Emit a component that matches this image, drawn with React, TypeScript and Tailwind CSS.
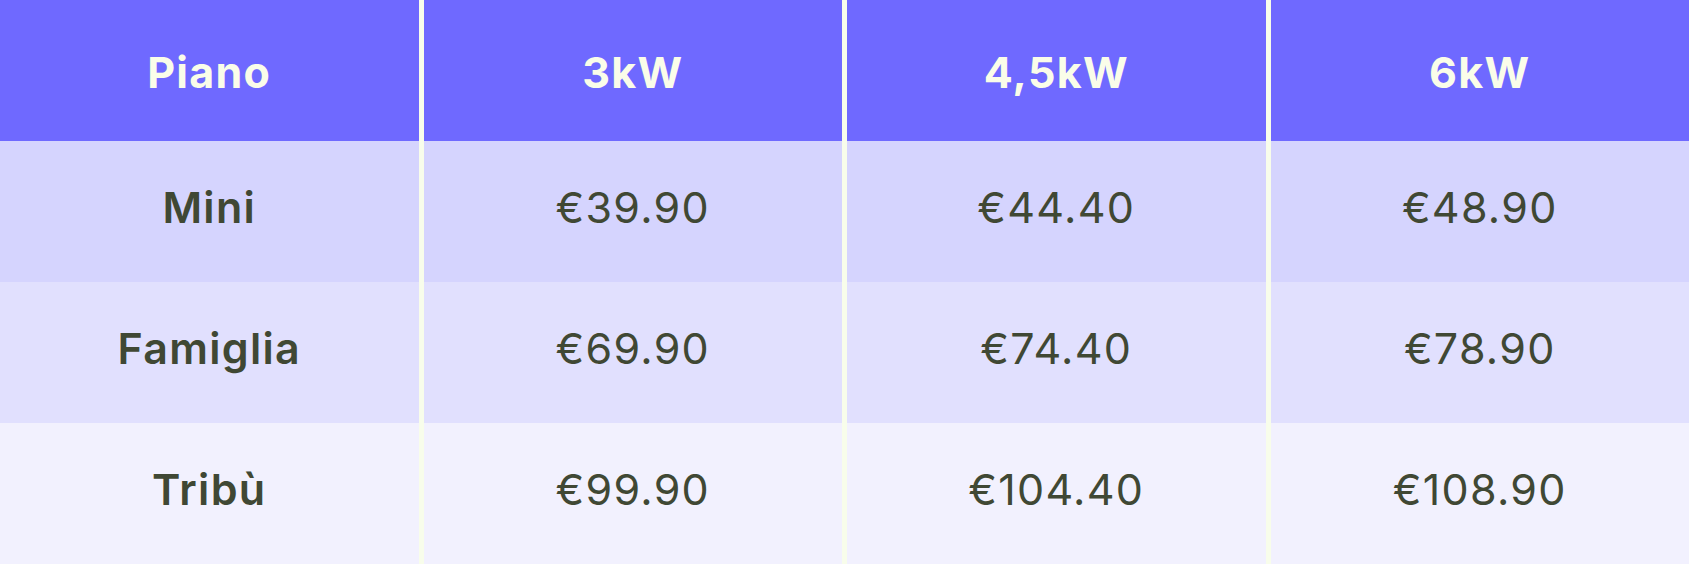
import { Fragment } from 'react';

const columns = ['Piano', '3kW', '4,5kW', '6kW'];

const rows = [
  { name: 'Mini', prices: ['€39.90', '€44.40', '€48.90'], bg: 'bg-[#d5d4fe]' },
  { name: 'Famiglia', prices: ['€69.90', '€74.40', '€78.90'], bg: 'bg-[#e1e0fe]' },
  { name: 'Tribù', prices: ['€99.90', '€104.40', '€108.90'], bg: 'bg-[#f2f1fe]' },
];

export default function App() {
  return (
    <div className="w-[1689px] h-[564px] bg-[#f8fdeb] font-['Inter',sans-serif] text-[43px]">
      <div className="grid grid-cols-4 gap-x-[5px] h-full grid-rows-4">
        {columns.map((c) => (
          <div
            key={c}
            className="flex items-center justify-center pt-[4px] bg-[#6f69ff] text-[#fafde9] font-bold tracking-[0.03em]"
          >
            {c}
          </div>
        ))}
        {rows.map((r) => (
          <Fragment key={r.name}>
            <div
              className={`flex items-center justify-center pb-[8px] ${r.bg} text-[#404834] font-semibold tracking-[0.03em]`}
            >
              {r.name}
            </div>
            {r.prices.map((p) => (
              <div
                key={p}
                className={`flex items-center justify-center pb-[8px] ${r.bg} text-[#404834] tracking-[0.03em]`}
              >
                {p}
              </div>
            ))}
          </Fragment>
        ))}
      </div>
    </div>
  );
}
